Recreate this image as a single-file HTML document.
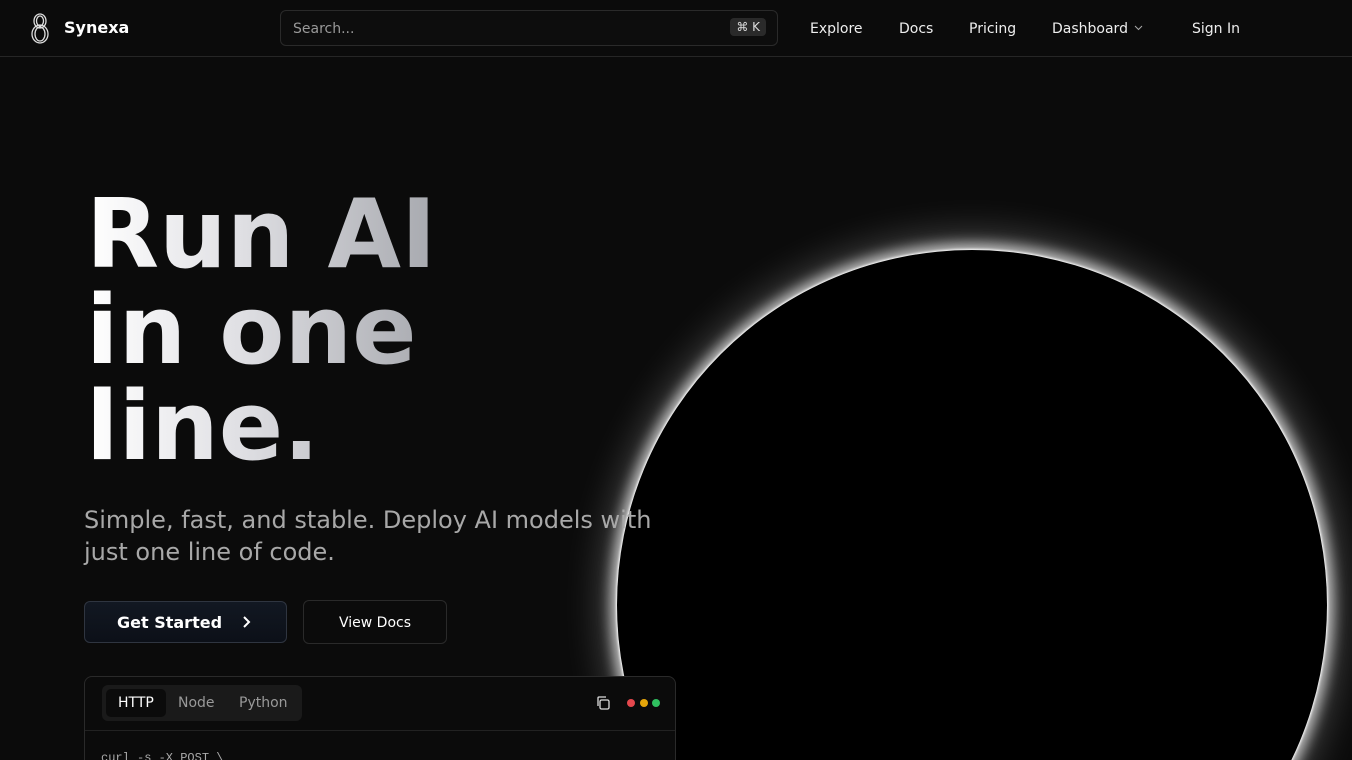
<!DOCTYPE html>
<html><head><meta charset="utf-8"><style>
*{margin:0;padding:0;box-sizing:border-box}
html,body{width:1352px;height:760px;overflow:hidden}
body{background:#0b0b0b;font-family:"DejaVu Sans","Liberation Sans",sans-serif;color:#fff;position:relative}
.wrap{position:absolute;left:0;top:0;width:1352px;height:760px;overflow:hidden}
.nav{position:absolute;left:0;top:0;width:1352px;height:57px;border-bottom:1px solid #262626;background:#0b0b0b;z-index:5}
.logo{position:absolute;left:30px;top:12px}
.brand{position:absolute;left:64px;top:18px;font-weight:bold;font-size:16px}
.search{position:absolute;left:280px;top:10px;width:498px;height:36px;border:1px solid #2a2a2a;border-radius:6px;background:#0d0d0d}
.search span{position:absolute;left:12px;top:10px;color:#999;font-size:14px}
.kbd{position:absolute;right:11px;top:7px;background:#2a2a2a;border-radius:4px;font-size:12px;color:#ddd;padding:2px 6px}
.nl{position:absolute;top:21px;font-size:14px;color:#eee}
.circle{position:absolute;left:617px;top:250px;width:710px;height:710px;border-radius:50%;background:#000;box-shadow:0 0 2px 1px #fff,0 0 14px 6px rgba(255,255,255,.75),0 0 40px 14px rgba(255,255,255,.25)}
h1{position:absolute;left:86px;top:187px;font-size:95px;line-height:96px;font-weight:bold;background:linear-gradient(90deg,#fff 0%,#e0e0e4 40%,#9ea0a6 100%);-webkit-background-clip:text;background-clip:text;color:transparent;width:380px;z-index:2}
.sub{position:absolute;left:84px;top:504px;font-size:24px;line-height:32px;color:#a8a8a8;width:600px;z-index:2}
.b1{position:absolute;left:84px;top:601px;width:203px;height:42px;border:1px solid #2f3540;border-radius:6px;background:linear-gradient(#121822,#0c1018);font-weight:bold;font-size:16px;padding:11px 0 0 32px;z-index:2}
.b2{position:absolute;left:303px;top:600px;width:144px;height:44px;border:1px solid #2a2a2a;border-radius:6px;background:#0b0b0b;font-size:14px;text-align:center;line-height:44px;z-index:2}
.code{position:absolute;left:84px;top:676px;width:592px;height:120px;border:1px solid #2a2a2a;border-radius:8px;background:#0b0b0b;z-index:2}
.tabs{position:absolute;left:17px;top:8px;width:200px;height:36px;background:#1a1a1a;border-radius:6px}
.tab{position:absolute;top:10px;font-size:14px;color:#999}
.hr{position:absolute;left:0;top:53px;width:100%;border-top:1px solid #222}
.dot{position:absolute;top:22px;width:8px;height:8px;border-radius:50%}
</style></head><body><div class="wrap">
<div class="nav">
<svg class="logo" width="20" height="32" viewBox="0 0 20 32" fill="none" stroke="#ddd" stroke-width="1.3"><ellipse cx="10" cy="9" rx="6" ry="7"/><ellipse cx="10" cy="22" rx="8" ry="9"/><ellipse cx="10" cy="9" rx="3.5" ry="5"/><ellipse cx="10" cy="22" rx="5" ry="7"/></svg>
<div class="brand">Synexa</div>
<div class="search"><span>Search...</span><div class="kbd">⌘ K</div></div>
<div class="nl" style="left:810px">Explore</div>
<div class="nl" style="left:899px">Docs</div>
<div class="nl" style="left:969px">Pricing</div>
<div class="nl" style="left:1052px">Dashboard <svg width="9" height="6" viewBox="0 0 9 6" style="margin-left:2px;vertical-align:2px" fill="none" stroke="#aaa" stroke-width="1"><path d="M1 1l3.5 3.5L8 1"/></svg></div>
<div class="nl" style="left:1192px">Sign In</div>
</div>
<div class="circle"></div>
<h1>Run AI in one line.</h1>
<div class="sub">Simple, fast, and stable. Deploy AI models with just one line of code.</div>
<div class="b1">Get Started <svg width="10" height="14" viewBox="0 0 10 14" style="margin-left:14px;vertical-align:-1px" fill="none" stroke="#fff" stroke-width="2"><path d="M2 2l5 5-5 5"/></svg></div>
<div class="b2">View Docs</div>
<div class="code">
<div class="tabs"><div style="position:absolute;left:4px;top:4px;width:60px;height:28px;background:#0b0b0b;border-radius:5px"></div>
<div class="tab" style="left:16px;color:#fff">HTTP</div><div class="tab" style="left:76px">Node</div><div class="tab" style="left:137px">Python</div></div>
<svg style="position:absolute;left:510px;top:18px" width="16" height="16" viewBox="0 0 16 16" fill="none" stroke="#ddd" stroke-width="1.3"><rect x="5" y="5" width="9" height="9" rx="1.5"/><path d="M3 11V3a1 1 0 0 1 1-1h7"/></svg>
<div class="dot" style="left:542px;background:#e5484d"></div><div class="dot" style="left:555px;background:#e5a50a"></div><div class="dot" style="left:567px;background:#30c060"></div>
<div class="hr"></div>
<div style="position:absolute;left:16px;top:74px;font-family:'Liberation Mono',monospace;font-size:12px;color:#aaa">curl -s -X POST \</div>
</div>
</div></body></html>
